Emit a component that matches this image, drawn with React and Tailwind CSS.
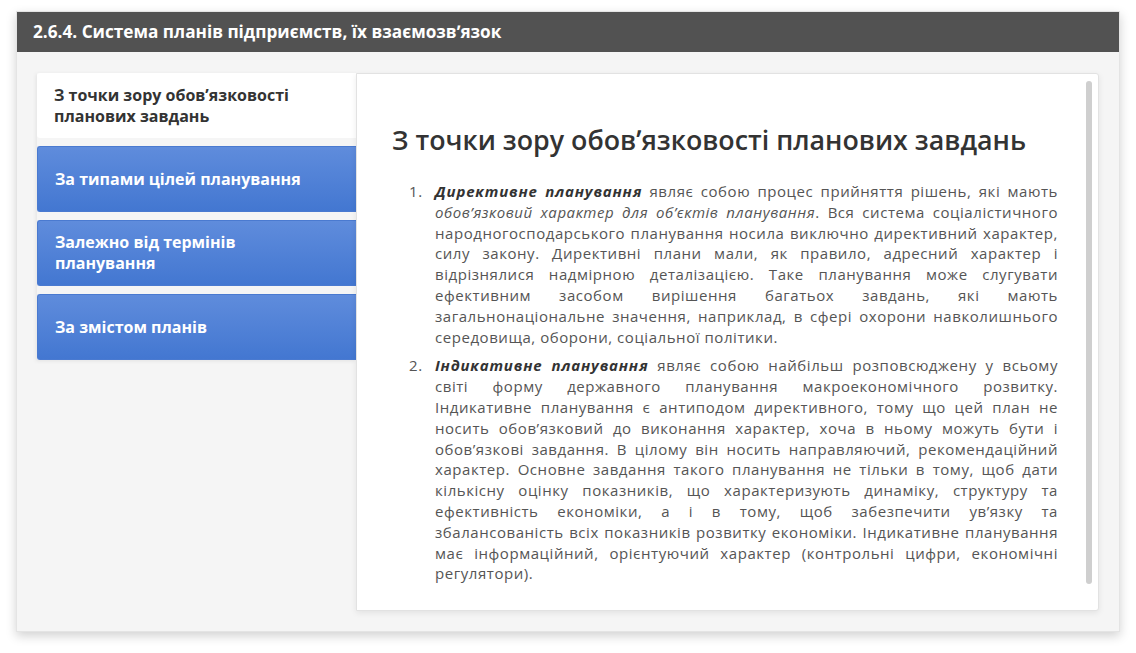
import React from 'react';

const tabs = [
  { label: 'З точки зору обовʼязковості планових завдань', active: true },
  { label: 'За типами цілей планування' },
  { label: 'Залежно від термінів планування' },
  { label: 'За змістом планів' },
];

function Tab({ label, active }) {
  if (active) {
    return (
      <div className="h-[65px] flex items-center pl-[17px] pr-6 bg-white rounded-l-[3px] text-[16px] font-bold leading-[21px] text-[#333]">
        <span className="max-w-[260px]">{label}</span>
      </div>
    );
  }
  return (
    <div className="h-[66px] flex items-center pl-[17px] pr-6 rounded-l-[3px] border border-r-0 border-[#4a7ad0] bg-gradient-to-b from-[#5f8cdc] to-[#4377d1] text-[16px] font-bold leading-[21px] text-white">
      <span className="max-w-[250px]">{label}</span>
    </div>
  );
}

function Item({ n, children }) {
  return (
    <li className="flex">
      <span className="w-[26px] pl-[17px] shrink-0 box-content -ml-[17px]">{n}.</span>
      <div className="flex-1 text-justify">{children}</div>
    </li>
  );
}

export default function App() {
  return (
    <div className="min-h-[653px] bg-white pt-[11px] px-4 font-['Open_Sans',sans-serif]">
      <div className="w-[1104px] bg-[#f5f5f5] shadow-[0_4px_10px_rgba(0,0,0,0.18)] border border-[#e4e4e4]">
        {/* Header */}
        <div className="h-10 bg-[#525252] flex items-center px-4 text-white text-[17.2px] font-bold">
          2.6.4. Система планів підприємств, їх взаємозвʼязок
        </div>

        <div className="flex pt-[21px] pl-5 pr-5 pb-5">
          {/* Tabs */}
          <div className="w-[319px] flex flex-col gap-2 shadow-[-1px_1px_4px_rgba(0,0,0,0.08)] self-start">
            {tabs.map((t) => (
              <Tab key={t.label} {...t} />
            ))}
          </div>

          {/* Content */}
          <div className="flex-1 h-[538px] bg-white border border-[#e2e2e2] rounded-r-[3px] shadow-[0_2px_6px_rgba(0,0,0,0.08)] flex">
            <div className="flex-1 pl-[35px] pr-7 pt-[50px] text-[#555]">
              <h2 className="text-[26.8px] font-semibold leading-[32px] text-[#333]">
                З точки зору обовʼязковості планових завдань
              </h2>
              <ol className="mt-[25px] pl-[17px] text-[15px] leading-[20.8px] tracking-[0.55px] flex flex-col gap-2">
                <Item n={1}>
                  <strong className="italic text-[#333] tracking-[0.8px]">Директивне планування</strong> являє собою процес прийняття рішень, які мають <em>обов’язковий характер для об’єктів планування</em>. Вся система соціалістичного народногосподарського планування носила виключно директивний характер, силу закону. Директивні плани мали, як правило, адресний характер і відрізнялися надмірною деталізацією. Таке планування може слугувати ефективним засобом вирішення багатьох завдань, які мають загальнонаціональне значення, наприклад, в сфері охорони навколишнього середовища, оборони, соціальної політики.
                </Item>
                <Item n={2}>
                  <strong className="italic text-[#333] tracking-[0.8px]">Індикативне планування</strong> являє собою найбільш розповсюджену у всьому світі форму державного планування макроекономічного розвитку. Індикативне планування є антиподом директивного, тому що цей план не носить обов’язковий до виконання характер, хоча в ньому можуть бути і обов’язкові завдання. В цілому він носить направляючий, рекомендаційний характер. Основне завдання такого планування не тільки в тому, щоб дати кількісну оцінку показників, що характеризують динаміку, структуру та ефективність економіки, а і в тому, щоб забезпечити ув’язку та збалансованість всіх показників розвитку економіки. Індикативне планування має інформаційний, орієнтуючий характер (контрольні цифри, економічні регулятори).
                </Item>
              </ol>
            </div>
            {/* Scrollbar */}
            <div className="w-[6px] mr-[6px] mt-[7px] h-[503px] rounded-full bg-[#cfcfcf]" />
          </div>
        </div>
      </div>
    </div>
  );
}
